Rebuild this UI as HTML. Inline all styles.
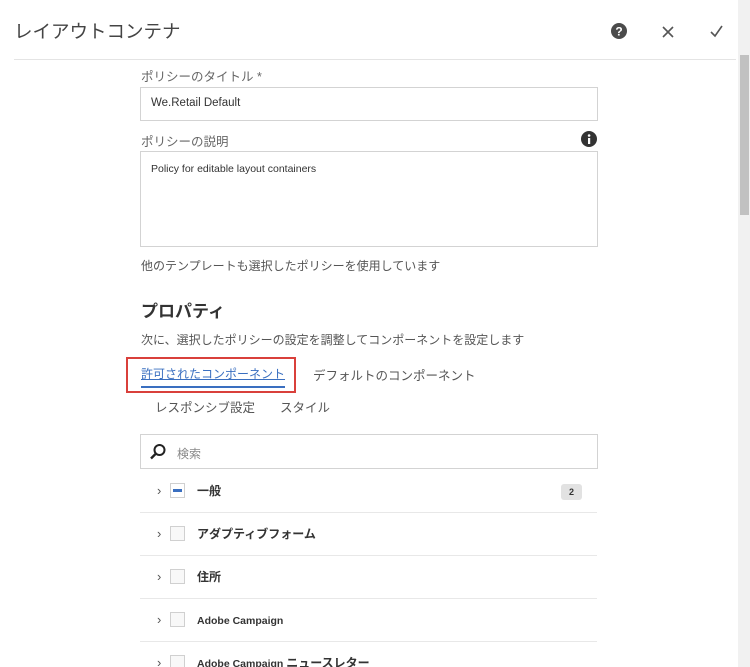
<!DOCTYPE html>
<html><head><meta charset="utf-8"><style>
html,body{margin:0;width:750px;height:667px;overflow:hidden}
body{background:#fff;font-family:"Liberation Sans","Noto Sans CJK JP",sans-serif;color:#4b4b4b;position:relative}
.a{position:absolute;white-space:nowrap}
.inp{position:absolute;border:1px solid #d3d3d3;background:#fff;box-sizing:border-box}
.row{position:absolute;left:140px;width:457px;height:43px;border-bottom:1px solid #e8e8e8;box-sizing:border-box}
.row .ch{position:absolute;left:17px;top:13px;font-size:13px;color:#555}
.row .cb{position:absolute;left:30px;top:13px;width:15px;height:15px;border:1px solid #d0d0d0;background:#f8f8f8;box-sizing:border-box}
.row .t{position:absolute;left:57px;top:13px;font-size:12px;font-weight:bold;color:#333;line-height:16px}
.row .t b{font-size:10.5px}
</style></head><body>
<div class="a" style="left:14px;top:18px;font-size:18.5px;color:#444">レイアウトコンテナ</div>
<svg class="a" style="left:611px;top:23px" width="16" height="16"><circle cx="8" cy="8" r="8" fill="#4b4b4b"/><text x="8" y="12.5" font-size="12" font-weight="bold" fill="#fff" text-anchor="middle" font-family="Liberation Sans">?</text></svg>
<svg class="a" style="left:661px;top:25px" width="14" height="14"><path d="M2 2L12 12M12 2L2 12" stroke="#555" stroke-width="1.6"/></svg>
<svg class="a" style="left:709px;top:24px" width="15" height="14"><path d="M2 8L6 12L13 2" stroke="#555" stroke-width="1.6" fill="none"/></svg>
<div class="a" style="left:14px;top:59px;width:722px;height:1px;background:#e4e4e4"></div>
<div class="a" style="left:738px;top:0;width:12px;height:667px;background:#f1f1f1"></div>
<div class="a" style="left:740px;top:55px;width:9px;height:160px;background:#c1c1c1"></div>
<div class="a" style="left:141px;top:66px;font-size:12.5px;color:#666">ポリシーのタイトル *</div>
<div class="inp" style="left:140px;top:87px;width:458px;height:34px"><span class="a" style="left:10px;top:9px;font-size:11.5px;color:#333">We.Retail Default</span></div>
<div class="a" style="left:141px;top:131px;font-size:12.5px;color:#666">ポリシーの説明</div>
<svg class="a" style="left:581px;top:131px" width="16" height="16"><circle cx="8" cy="8" r="8" fill="#333"/><rect x="7" y="7" width="2.2" height="6" fill="#fff"/><circle cx="8.1" cy="4.5" r="1.3" fill="#fff"/></svg>
<div class="inp" style="left:140px;top:151px;width:458px;height:96px"><span class="a" style="left:10px;top:11px;font-size:10.5px;color:#333">Policy for editable layout containers</span></div>
<div class="a" style="left:141px;top:257px;font-size:12px;color:#555">他のテンプレートも選択したポリシーを使用しています</div>
<div class="a" style="left:141px;top:297px;font-size:17px;font-weight:bold;color:#333">プロパティ</div>
<div class="a" style="left:141px;top:331px;font-size:12px;color:#555">次に、選択したポリシーの設定を調整してコンポーネントを設定します</div>
<div class="a" style="left:141px;top:365px;font-size:12px;color:#3a6fc0;text-decoration:underline">許可されたコンポーネント</div>
<div class="a" style="left:141px;top:386px;width:144px;height:2px;background:#3a6fc0"></div>
<div class="a" style="left:126px;top:357px;width:170px;height:36px;border:2px solid #d9403b;box-sizing:border-box"></div>
<div class="a" style="left:313px;top:365px;font-size:12.5px;color:#555">デフォルトのコンポーネント</div>
<div class="a" style="left:155px;top:397px;font-size:12.5px;color:#555">レスポンシブ設定</div>
<div class="a" style="left:280px;top:397px;font-size:12.5px;color:#555">スタイル</div>
<div class="inp" style="left:140px;top:434px;width:458px;height:35px">
<svg class="a" style="left:8px;top:8px" width="18" height="18"><circle cx="10.5" cy="7" r="5" stroke="#222" stroke-width="2" fill="none"/><path d="M7 10.5L2 15.5" stroke="#222" stroke-width="2.4"/></svg>
<span class="a" style="left:36px;top:10px;font-size:12px;color:#888">検索</span></div>
<div class="row" style="top:470px"><span class="ch">›</span><span class="cb" style="background:#fff"><span class="a" style="left:2px;top:5px;width:9px;height:3px;background:#3a6fc0"></span></span><span class="t">一般</span><span class="a" style="left:421px;top:14px;width:21px;height:16px;background:#e2e2e2;border-radius:3px;font-size:9px;font-weight:bold;text-align:center;line-height:16px;color:#333">2</span></div>
<div class="row" style="top:513px"><span class="ch">›</span><span class="cb"></span><span class="t">アダプティブフォーム</span></div>
<div class="row" style="top:556px"><span class="ch">›</span><span class="cb"></span><span class="t">住所</span></div>
<div class="row" style="top:599px"><span class="ch">›</span><span class="cb"></span><span class="t"><b>Adobe Campaign</b></span></div>
<div class="row" style="top:642px"><span class="ch">›</span><span class="cb"></span><span class="t"><b>Adobe Campaign </b>ニュースレター</span></div>
</body></html>
